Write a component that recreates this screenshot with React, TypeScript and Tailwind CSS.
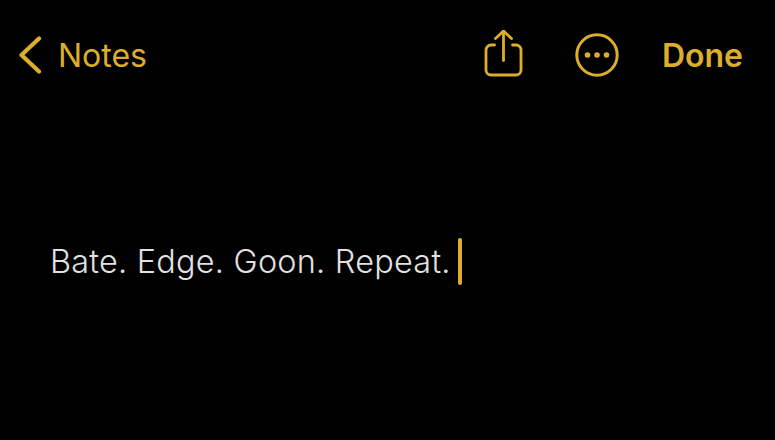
export default function App() {
  return (
    <main className="h-[440px] w-[775px] overflow-hidden bg-black" style={{ fontFamily: 'Inter, sans-serif' }}>
      {/* Nav bar */}
      <header className="flex h-[110px] items-center pl-[18px] pr-[32px] pb-[1px] text-[#dcae2c]">
        <svg width="24" height="38" viewBox="0 0 24 38" fill="none" stroke="currentColor" strokeWidth="4.2" strokeLinecap="round" strokeLinejoin="round">
          <path d="M21 2.5 L3.5 19 L21 35.5" />
        </svg>
        <span className="ml-[16px] mt-[2px] text-[32px] leading-none">Notes</span>

        <div className="ml-auto flex items-center">
          <svg width="40" height="50" viewBox="0 0 40 50" fill="none" stroke="currentColor" strokeWidth="2.8" strokeLinecap="round" strokeLinejoin="round">
            <path d="M10.5 15 H7 a5 5 0 0 0 -5 5 V40 a5 5 0 0 0 5 5 H32 a5 5 0 0 0 5 -5 V20 a5 5 0 0 0 -5 -5 H28.5" />
            <path d="M19.5 30.5 V1" />
            <path d="M11.5 8.5 L19.5 1 L27.5 8.5" />
          </svg>
          <svg className="ml-[51px]" width="44" height="44" viewBox="0 0 44 44" fill="none">
            <circle cx="22" cy="22" r="20.2" stroke="currentColor" strokeWidth="3" />
            <circle cx="12.5" cy="22" r="2.8" fill="currentColor" />
            <circle cx="22" cy="22" r="2.8" fill="currentColor" />
            <circle cx="31.5" cy="22" r="2.8" fill="currentColor" />
          </svg>
          <span className="ml-[43px] mt-[2px] text-[32px] font-semibold leading-none">Done</span>
        </div>
      </header>

      {/* Note body */}
      <div className="mt-[128px] flex items-center pl-[50px] text-[#e2e2e2]">
        <span className="text-[32.4px] font-[350] tracking-[0.25px] leading-[46px]">Bate. Edge. Goon. Repeat.</span>
        <span className="ml-[7px] h-[47px] w-[4px] rounded-full bg-[#dcae2c]" />
      </div>
    </main>
  );
}
